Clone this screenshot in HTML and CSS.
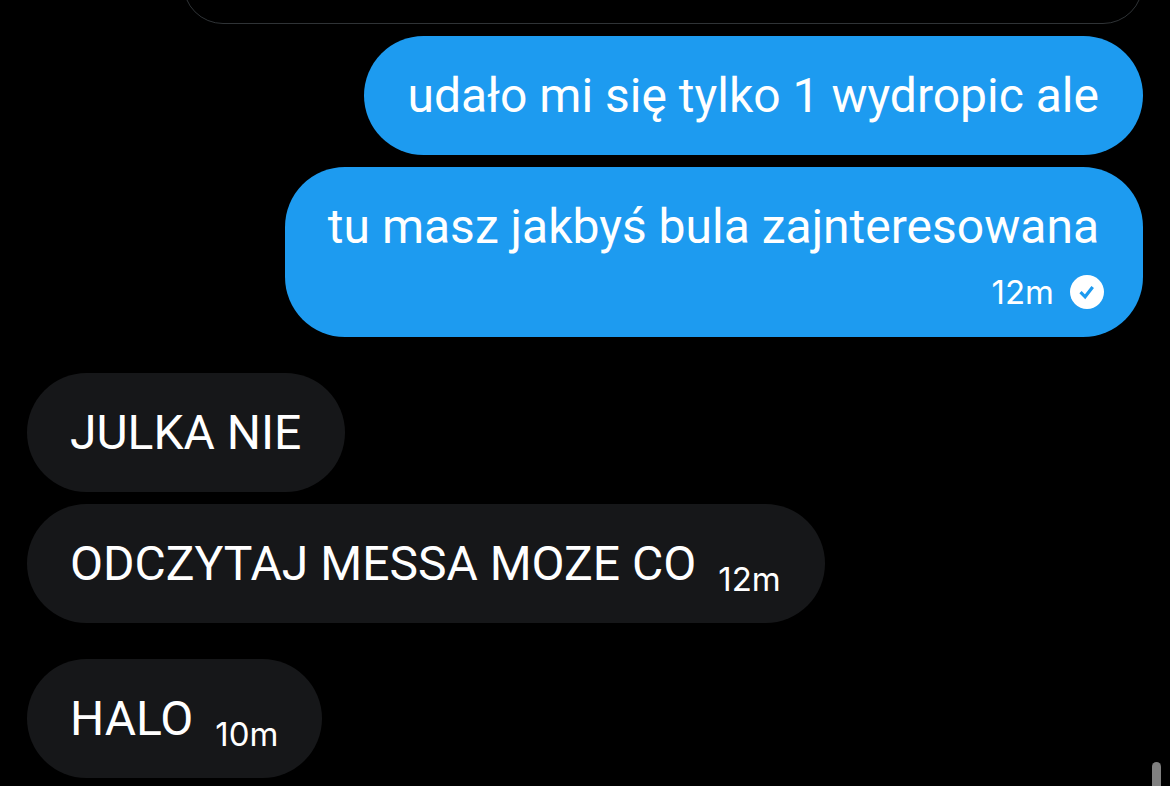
FILE: index.html
```html
<!DOCTYPE html>
<html lang="pl">
  <head>
    <meta charset="utf-8">
    <title>Messages</title>
    <meta name="viewport" content="width=device-width, initial-scale=1">
    <link rel="stylesheet" href="styles.css">
  </head>
  <body>
    <main class="chat">
      <div class="attachment"></div>
      <div class="message sent">
        <p class="text">udało mi się tylko 1 wydropic ale</p>
      </div>
      <div class="message sent stacked">
        <p class="text">tu masz jakbyś bula zajnteresowana</p>
        <div class="meta">
          <span class="time">12m</span>
          <svg class="check" viewBox="0 0 34 34" aria-hidden="true">
            <circle cx="17" cy="17" r="17" fill="#fff" />
            <path d="M10.5 17.2l4.6 4.6 7.6-9.8" fill="none" stroke="#1d9bf0" stroke-width="3.2" />
          </svg>
        </div>
      </div>
      <div class="message received group-start">
        <p class="text">JULKA NIE</p>
      </div>
      <div class="message received">
        <p class="text">ODCZYTAJ MESSA MOZE CO</p>
        <span class="time">12m</span>
      </div>
      <div class="message received group-start">
        <p class="text">HALO</p>
        <span class="time">10m</span>
      </div>
    </main>
    <div class="scrollbar"></div>
  </body>
</html>
```

FILE: styles.css
```css
* {
  box-sizing: border-box;
}
body {
  margin: 0;
  background-color: #000;
  color: #fff;
  font-family: Roboto, Arial, sans-serif;
  overflow: hidden;
}
.chat {
  display: flex;
  flex-direction: column;
  gap: 12px;
  padding: 0 27px 8px;
}
/* bottom edge of the card above, scrolled mostly out of view */
.attachment {
  align-self: flex-end;
  width: 86%;
  height: 80px;
  margin-top: -56px;
  border: 1px solid #2f3336;
  border-radius: 40px;
}
.message {
  display: flex;
  align-items: flex-end;
  min-height: 119px;
  padding: 29px 44px 28px 43px;
  border-radius: 60px;
}
.sent {
  align-self: flex-end;
  background-color: #1d9bf0;
}
.received {
  align-self: flex-start;
  gap: 22px;
  background-color: #161719;
}
.stacked {
  flex-direction: column;
  padding-right: 39px;
}
.stacked .text {
  padding-right: 5px;
}
.group-start {
  margin-top: 24px;
}
.text {
  margin: 0;
  font-size: 48px;
  line-height: 62px;
  white-space: nowrap;
}
.meta {
  display: flex;
  align-items: center;
  gap: 16px;
  margin-top: 17px;
}
.time {
  font-family: Inter, sans-serif;
  font-size: 33px;
  line-height: 32px;
}
.check {
  width: 34px;
  height: 34px;
}
.scrollbar {
  position: fixed;
  right: 9px;
  bottom: 0;
  width: 9px;
  height: 24px;
  border-radius: 5px 5px 0 0;
  background-color: #808080;
}
```
